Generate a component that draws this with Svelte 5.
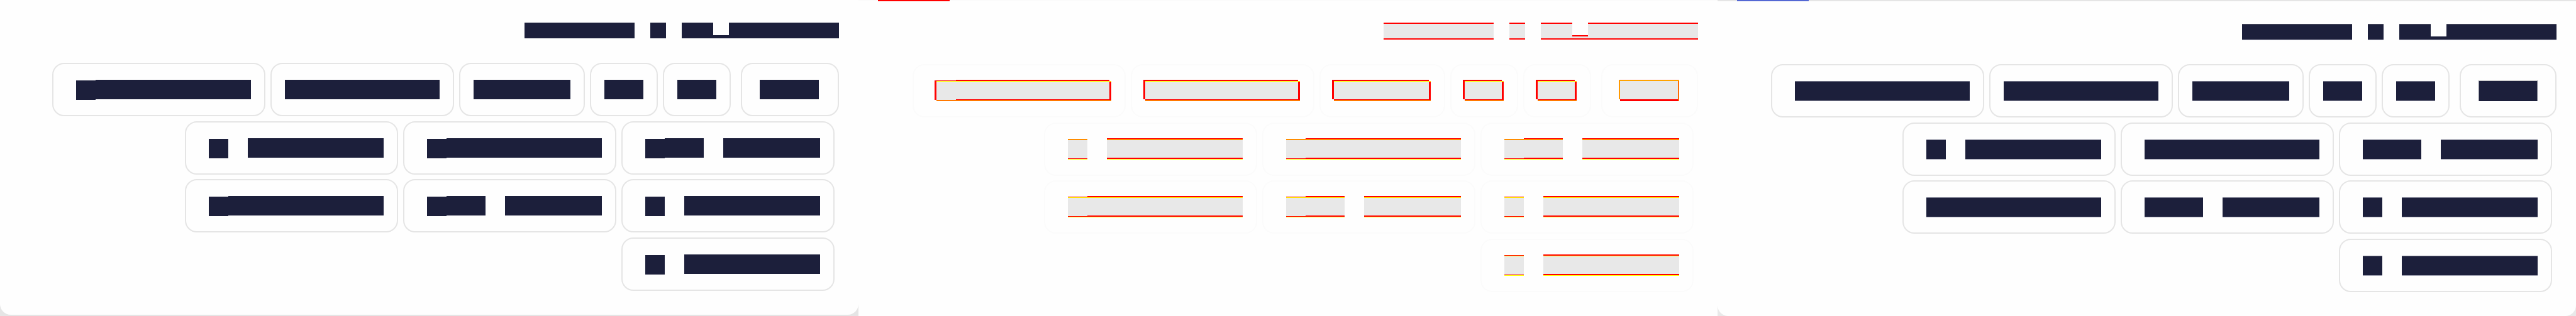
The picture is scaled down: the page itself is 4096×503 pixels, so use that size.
<script>
  // Widths of the blocks inside each chip; `lead` marks a leading marker, `gap` a blank.
  const lead = { w: 31, lead: true };
  const gap = { w: 31, gap: true };
  const top = [
    { wide: true, bars: [lead, { w: 247 }] },
    { bars: [{ w: 246 }] },
    { bars: [{ w: 154 }] },
    { bars: [{ w: 62 }] },
    { bars: [{ w: 62 }] },
    { last: true, bars: [{ w: 94 }] }
  ];
  const single = { wide: true, bars: [lead, gap, { w: 216 }] };
  const full = { wide: true, bars: [lead, { w: 247 }] };
  const split = { wide: true, bars: [lead, { w: 62 }, gap, { w: 154 }] };
  const rows = [top, [single, full, split], [full, split, single], [single]];
  const title = [{ w: 175 }, { w: 25, gap: true }, { w: 25 }, { w: 25, gap: true }, { w: 50 }, { w: 25, under: true }, { w: 175 }];
  const panels = ['before', 'diff', 'after'];
</script>

<main>
  {#each panels as kind}
    <section class="panel {kind}">
      <div class="sheet">
        {#if kind !== 'before'}<div class="accent"></div>{/if}
        <header>
          {#each title as b}
            <span class="mark" class:gap={b.gap} class:under={b.under} style:width="{b.w}px"></span>
          {/each}
        </header>
        <div class="rows">
          {#each rows as row, i}
            <div class="row" class:first={i === 0}>
              {#each row as chip}
                <div class="chip" class:wide={chip.wide} class:last={chip.last}>
                  <div class="line">
                    {#each chip.bars as b}
                      <span class="bar" class:gap={b.gap} class:lead={b.lead} style:width="{b.w}px"></span>
                    {/each}
                  </div>
                </div>
              {/each}
            </div>
          {/each}
        </div>
      </div>
    </section>
  {/each}
</main>

<style>
  :global(body) { margin: 0; background: #fff; }
  main { display: grid; grid-template-columns: repeat(3, 1fr); min-height: 100vh; }
  .panel { --ink: #1c1f3b; --edge: #e5e5e5; --pad: 27px; display: flex; background: #fefefe; }
  .sheet {
    flex: 1; box-sizing: border-box; position: relative; display: flex; flex-direction: column;
    background: #fefefe; border-radius: 0 0 17px 17px; padding: 38px 31px 38px 0;
  }
  .before { background: #e5e5e5; }
  .before .sheet { padding-top: 36px; padding-bottom: 38px; margin-bottom: 2px; }
  .diff { --edge: #fbfbfb; --pad: 25px; }
  .diff .sheet, .after .sheet { border-top: 2px solid var(--edge); padding-top: 36px; }
  .diff .sheet { padding-top: 34px; }
  .after { background: #e9e9e9; }
  .accent { position: absolute; top: -2px; left: 31px; width: 114px; height: 2px; background: #f00; }
  .after .accent { background: #5468d4; }

  header { display: flex; justify-content: flex-end; height: 64px; }
  .mark { box-sizing: border-box; height: 25px; background: var(--ink); }
  .mark.under { height: 5px; margin-top: 20px; }
  .diff .mark { height: 27px; background: #e8e8e8; border: solid #f00; border-width: 2px 0; }
  .diff .mark.under { height: 7px; }
  .after .mark { height: 26px; border-top: 1px solid #555767; border-bottom: 1px solid #c4c5d3; }
  .after .mark.under { height: 6px; border-top: 0; }
  .diff header { height: 66px; }

  .rows { flex: 1; display: flex; flex-direction: column; justify-content: space-between; }
  .row { display: flex; justify-content: flex-end; gap: 8px; padding-right: 7px; }
  .row.first { padding-right: 0; }
  .chip {
    box-sizing: border-box; height: 85px; padding: 0 21px; border: 2px solid var(--edge);
    border-radius: 19px; display: flex;
  }
  .chip.wide { padding-left: 36px; }
  .chip.last { margin-left: 8px; padding: 0 30px 0 28px; }
  .after .chip.last, .diff .chip.last { padding: 0 28px; }
  .line { display: flex; margin-top: calc(var(--pad) - 2px); position: relative; align-self: flex-start; }
  .bar { height: 31px; background: var(--ink); }
  .before .lead { margin-top: 1px; }
  .after .bar { box-sizing: border-box; height: 32px; border-top: 1px solid #75778a; border-bottom: 1px solid #9c9eae; }
  .after .last .bar { height: 33px; margin-top: -1px; border: 1px solid #777988; border-top-color: #bbb; border-bottom: 0; }
  .diff .bar {
    height: 34px;
    background: linear-gradient(#f00 2px, #ff0 2px 3px, #e8e8e8 3px 31px, #f00 31px 33px, #ff0 33px);
  }
  .diff .lead {
    background: linear-gradient(transparent 1px, #f00 1px 2px, #ff0 2px 3px, #e8e8e8 3px 32px, #f00 32px 33px, #ff0 33px);
  }
  .diff .first .line { margin-left: -3px; padding-left: 3px; }
  .diff .first .line::before,
  .diff .first .line::after { content: ''; position: absolute; width: 3px; background: #f00; }
  .diff .first .line::before { left: 0; top: 0; height: 31px; }
  .diff .first .wide .line::before { top: 1px; }
  .diff .first .line::after {
    right: 0; top: 0; height: 34px;
    background: linear-gradient(#fefefe 2px, #ff0 2px 3px, #f00 3px 33px, #ff0 33px);
  }
  .diff .last .bar { background: linear-gradient(#f00 1px, #ff0 1px 2px, #e8e8e8 2px 31px, #f00 31px); }
  .diff .first .last .line { margin-left: -2px; padding-left: 2px; }
  .diff .first .last .line::before { width: 2px; background: linear-gradient(90deg, #f00 1px, #ff0 1px); }
  .diff .first .last .line::after { width: 2px; top: 2px; height: 32px; background: linear-gradient(90deg, #f00 1px, #ff0 1px); }
  .bar.gap, .mark.gap, .diff .gap, .after .gap, .diff .mark.gap { background: none; border-color: transparent; }
</style>
